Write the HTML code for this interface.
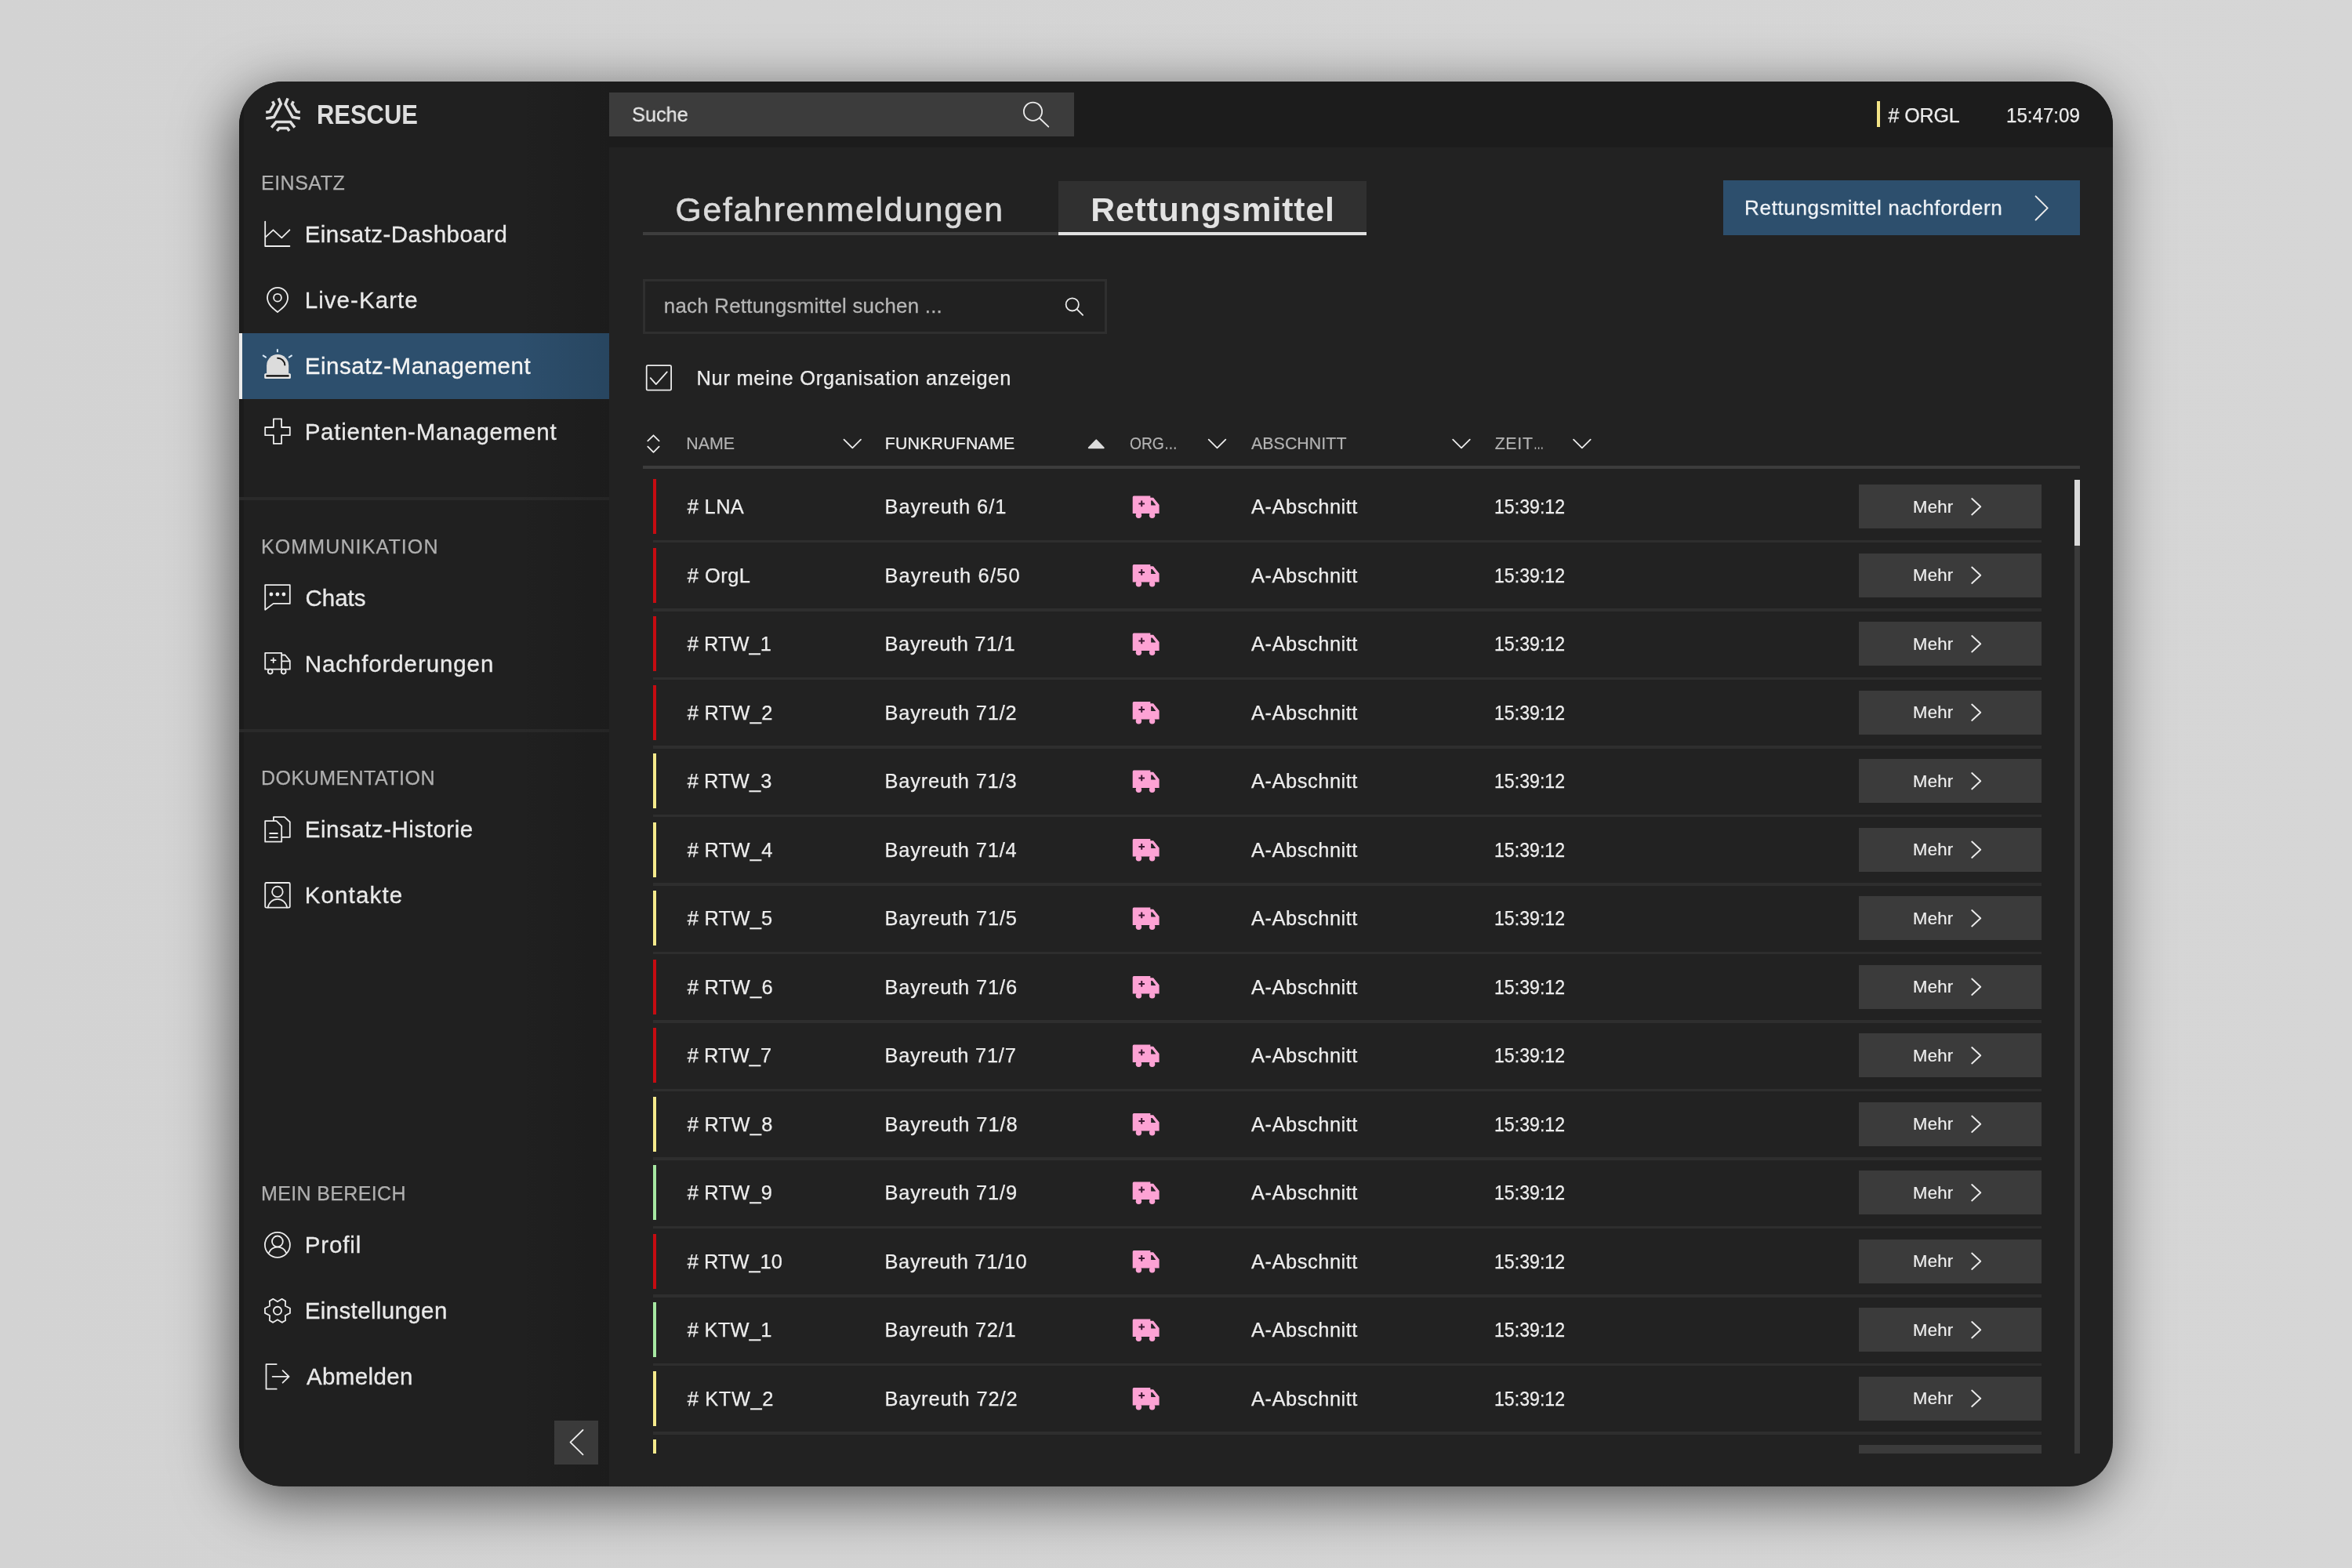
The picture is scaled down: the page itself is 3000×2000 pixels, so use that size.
<!DOCTYPE html>
<html lang="de"><head><meta charset="utf-8"><title>RESCUE – Einsatz-Management</title>
<style>
html,body{margin:0;padding:0}
body{width:3000px;height:2000px;background:linear-gradient(to right,#d3d3d3,#d6d6d6);position:relative;overflow:hidden;font-family:"Liberation Sans",sans-serif}
#device{position:absolute;left:305px;top:104px;width:2390px;height:1791.6px;border-radius:56px;background:#222222;box-shadow:-6px 16px 74px rgba(0,0,0,.6);overflow:hidden}
#stage{position:absolute;left:-305px;top:-104px;width:3000px;height:2000px;will-change:transform}
.b{position:absolute}
.t{position:absolute;white-space:pre;line-height:1;font-family:"Liberation Sans",sans-serif}
svg{position:absolute;overflow:visible}
.ic{fill:none;stroke:#ececec;stroke-width:1.8;stroke-linecap:round;stroke-linejoin:round}
#list{position:absolute;left:800px;top:598px;width:1880px;height:1255.7px;overflow:hidden}
#listin{position:absolute;left:-800px;top:-598px;width:3000px;height:2000px}
</style></head><body>
<div id="device"><div id="stage">

<div class="b" style="left:777px;top:104px;width:1918px;height:84px;background:#1c1c1c"></div>
<div class="b" style="left:305px;top:104px;width:472px;height:1791px;background:#202020"></div>
<div class="b" style="left:305px;top:104px;width:5.5px;height:1792px;background:#1b1b1b"></div>
<div class="b" style="left:305px;top:424.5px;width:472px;height:84px;background:#2d4f6d"></div>
<div class="b" style="left:305px;top:424.5px;width:4px;height:84px;background:#ececec"></div>
<div class="b" style="left:305px;top:634px;width:472px;height:4px;background:#2a2a2a"></div>
<div class="b" style="left:305px;top:930px;width:472px;height:4px;background:#2a2a2a"></div>
<div class="b" style="left:657px;top:104px;width:120px;height:1791px;background:linear-gradient(to right,rgba(0,0,0,0),rgba(0,0,0,.12))"></div>
<div class="b" style="left:707px;top:1812px;width:56px;height:56px;background:#3a3a3a"></div>
<div class="b" style="left:777px;top:118px;width:593.3px;height:56px;background:#3c3c3c"></div>
<div class="b" style="left:2394px;top:129.3px;width:4px;height:33.2px;background:#f3e487"></div>
<div class="b" style="left:819.5px;top:296.4px;width:530px;height:4px;background:#3e3e3e"></div>
<div class="b" style="left:1349.5px;top:230.5px;width:393.7px;height:70px;background:#303030"></div>
<div class="b" style="left:1349.5px;top:296.4px;width:393.7px;height:4.1px;background:#e2e2e2"></div>
<div class="b" style="left:2198px;top:230px;width:455px;height:70px;background:#2d4f6d"></div>
<div class="b" style="left:819.5px;top:355.8px;width:592.5px;height:70px;box-sizing:border-box;border:3.5px solid #2f2f2f;background:#212121"></div>
<div class="b" style="left:819.5px;top:594.2px;width:1833.5px;height:3.6px;background:#3c3c3c"></div>
<div class="b" style="left:2646px;top:611.6px;width:7.3px;height:1242.1px;background:#3b3b3b"></div>
<div class="b" style="left:2646px;top:611.6px;width:7.3px;height:84px;background:#dadada"></div>
<div class="t" style="left:403.73px;top:129.45px;font-size:35.61px;color:#dedede;font-weight:700;transform:scaleX(0.8684);transform-origin:0 0">RESCUE</div>
<div class="t" style="left:333.00px;top:221.33px;font-size:25.00px;letter-spacing:0.500px;color:#b0b0b0;-webkit-text-stroke:0.25px">EINSATZ</div>
<div class="t" style="left:333.00px;top:685.13px;font-size:25.00px;letter-spacing:1.119px;color:#b0b0b0;-webkit-text-stroke:0.25px">KOMMUNIKATION</div>
<div class="t" style="left:333.00px;top:980.33px;font-size:25.00px;letter-spacing:0.477px;color:#b0b0b0;-webkit-text-stroke:0.25px">DOKUMENTATION</div>
<div class="t" style="left:333.00px;top:1510.33px;font-size:25.00px;letter-spacing:0.353px;color:#b0b0b0;-webkit-text-stroke:0.25px">MEIN BEREICH</div>
<div class="t" style="left:388.68px;top:284.27px;font-size:29.51px;letter-spacing:0.452px;color:#e9e9e9;-webkit-text-stroke:0.30px">Einsatz-Dashboard</div>
<div class="t" style="left:388.68px;top:368.27px;font-size:29.51px;letter-spacing:1.064px;color:#e9e9e9;-webkit-text-stroke:0.30px">Live-Karte</div>
<div class="t" style="left:388.68px;top:452.27px;font-size:29.51px;letter-spacing:0.539px;color:#f4f4f4;-webkit-text-stroke:0.30px">Einsatz-Management</div>
<div class="t" style="left:388.68px;top:536.27px;font-size:29.51px;letter-spacing:0.750px;color:#e9e9e9;-webkit-text-stroke:0.30px">Patienten-Management</div>
<div class="t" style="left:389.59px;top:747.52px;font-size:29.51px;letter-spacing:-0.050px;color:#e9e9e9;-webkit-text-stroke:0.30px">Chats</div>
<div class="t" style="left:388.68px;top:831.52px;font-size:29.51px;letter-spacing:0.906px;color:#e9e9e9;-webkit-text-stroke:0.30px">Nachforderungen</div>
<div class="t" style="left:388.68px;top:1043.02px;font-size:29.51px;letter-spacing:0.531px;color:#e9e9e9;-webkit-text-stroke:0.30px">Einsatz-Historie</div>
<div class="t" style="left:388.68px;top:1127.02px;font-size:29.51px;letter-spacing:1.154px;color:#e9e9e9;-webkit-text-stroke:0.30px">Kontakte</div>
<div class="t" style="left:388.68px;top:1573.02px;font-size:29.51px;letter-spacing:0.899px;color:#e9e9e9;-webkit-text-stroke:0.30px">Profil</div>
<div class="t" style="left:388.68px;top:1657.02px;font-size:29.51px;letter-spacing:0.376px;color:#e9e9e9;-webkit-text-stroke:0.30px">Einstellungen</div>
<div class="t" style="left:391.04px;top:1741.02px;font-size:29.51px;letter-spacing:0.350px;color:#e9e9e9;-webkit-text-stroke:0.30px">Abmelden</div>
<div class="t" style="left:805.70px;top:133.35px;font-size:26.16px;color:#e4e4e4;-webkit-text-stroke:0.26px;transform:scaleX(0.9689);transform-origin:0 0">Suche</div>
<div class="t" style="left:2408.45px;top:134.58px;font-size:25.00px;letter-spacing:-0.075px;color:#ececec;-webkit-text-stroke:0.25px"># ORGL</div>
<div class="t" style="left:2558.72px;top:134.58px;font-size:25.00px;color:#ececec;-webkit-text-stroke:0.25px;transform:scaleX(0.9645);transform-origin:0 0">15:47:09</div>
<div class="t" style="left:861.49px;top:245.62px;font-size:42.73px;letter-spacing:1.754px;color:#dadada;-webkit-text-stroke:0.60px">Gefahrenmeldungen</div>
<div class="t" style="left:1391.19px;top:245.82px;font-size:42.73px;letter-spacing:0.904px;color:#e2e2e2;font-weight:700">Rettungsmittel</div>
<div class="t" style="left:2225.02px;top:252.35px;font-size:26.16px;letter-spacing:0.587px;color:#eef2f6;-webkit-text-stroke:0.26px">Rettungsmittel nachfordern</div>
<div class="t" style="left:846.85px;top:378.09px;font-size:25.87px;letter-spacing:0.244px;color:#b6b6b6;-webkit-text-stroke:0.26px">nach Rettungsmittel suchen ...</div>
<div class="t" style="left:888.47px;top:469.71px;font-size:25.44px;letter-spacing:0.730px;color:#ececec;-webkit-text-stroke:0.25px">Nur meine Organisation anzeigen</div>
<div class="t" style="left:875.26px;top:555.71px;font-size:21.37px;letter-spacing:0.042px;color:#b2b2b2;-webkit-text-stroke:0.21px">NAME</div>
<div class="t" style="left:1128.76px;top:555.71px;font-size:21.37px;letter-spacing:0.163px;color:#ededed;-webkit-text-stroke:0.21px">FUNKRUFNAME</div>
<div class="t" style="left:1440.86px;top:555.71px;font-size:21.37px;color:#b2b2b2;-webkit-text-stroke:0.21px;transform:scaleX(0.9005);transform-origin:0 0">ORG<span style="display:inline-block;letter-spacing:0;margin-left:0.04px;transform:scaleX(0.8757);transform-origin:0 0">…</span></div>
<div class="t" style="left:1595.97px;top:555.71px;font-size:21.37px;letter-spacing:0.057px;color:#b2b2b2;-webkit-text-stroke:0.21px">ABSCHNITT</div>
<div class="t" style="left:1906.63px;top:555.71px;font-size:21.37px;letter-spacing:0.688px;color:#b2b2b2;-webkit-text-stroke:0.21px">ZEIT<span style="display:inline-block;letter-spacing:0;margin-left:0.14px;transform:scaleX(0.6180);transform-origin:0 0">…</span></div>
<div id="list"><div id="listin">
<div class="b" style="left:833.3px;top:611.25px;width:4.2px;height:70px;background:#c60b11"></div>
<div class="b" style="left:833.3px;top:688.95px;width:1771px;height:3.4px;background:#2e2e2e"></div>
<div class="b" style="left:2371.3px;top:618.25px;width:233px;height:56px;background:#3b3b3b"></div>
<div class="t" style="left:876.70px;top:634.21px;font-size:25.44px;letter-spacing:0.359px;color:#ededed;-webkit-text-stroke:0.25px"># LNA</div>
<div class="t" style="left:1128.47px;top:634.21px;font-size:25.44px;letter-spacing:0.970px;color:#ededed;-webkit-text-stroke:0.25px">Bayreuth 6/1</div>
<div class="t" style="left:1596.00px;top:634.21px;font-size:25.44px;letter-spacing:0.537px;color:#ededed;-webkit-text-stroke:0.25px">A-Abschnitt</div>
<div class="t" style="left:1905.60px;top:634.21px;font-size:25.44px;color:#ededed;-webkit-text-stroke:0.25px;transform:scaleX(0.9095);transform-origin:0 0">15:39:12</div>
<div class="t" style="left:2440.01px;top:635.54px;font-size:22.09px;letter-spacing:0.244px;color:#ededed;-webkit-text-stroke:0.22px">Mehr</div>
<svg style="left:0;top:0" width="3000" height="2000"><use href="#amb" x="0" y="0.0"/><polyline class="ic" style="stroke-width:1.9" points="2515.2,636.05 2526.2,646.25 2515.2,656.45"/></svg>
<div class="b" style="left:833.3px;top:698.75px;width:4.2px;height:70px;background:#c60b11"></div>
<div class="b" style="left:833.3px;top:776.45px;width:1771px;height:3.4px;background:#2e2e2e"></div>
<div class="b" style="left:2371.3px;top:705.75px;width:233px;height:56px;background:#3b3b3b"></div>
<div class="t" style="left:876.70px;top:721.71px;font-size:25.44px;letter-spacing:0.494px;color:#ededed;-webkit-text-stroke:0.25px"># OrgL</div>
<div class="t" style="left:1128.47px;top:721.71px;font-size:25.44px;letter-spacing:1.140px;color:#ededed;-webkit-text-stroke:0.25px">Bayreuth 6/50</div>
<div class="t" style="left:1596.00px;top:721.71px;font-size:25.44px;letter-spacing:0.537px;color:#ededed;-webkit-text-stroke:0.25px">A-Abschnitt</div>
<div class="t" style="left:1905.60px;top:721.71px;font-size:25.44px;color:#ededed;-webkit-text-stroke:0.25px;transform:scaleX(0.9095);transform-origin:0 0">15:39:12</div>
<div class="t" style="left:2440.01px;top:723.04px;font-size:22.09px;letter-spacing:0.244px;color:#ededed;-webkit-text-stroke:0.22px">Mehr</div>
<svg style="left:0;top:0" width="3000" height="2000"><use href="#amb" x="0" y="87.5"/><polyline class="ic" style="stroke-width:1.9" points="2515.2,723.55 2526.2,733.75 2515.2,743.95"/></svg>
<div class="b" style="left:833.3px;top:786.25px;width:4.2px;height:70px;background:#c60b11"></div>
<div class="b" style="left:833.3px;top:863.95px;width:1771px;height:3.4px;background:#2e2e2e"></div>
<div class="b" style="left:2371.3px;top:793.25px;width:233px;height:56px;background:#3b3b3b"></div>
<div class="t" style="left:876.70px;top:809.21px;font-size:25.44px;letter-spacing:0.048px;color:#ededed;-webkit-text-stroke:0.25px"># RTW_1</div>
<div class="t" style="left:1128.47px;top:809.21px;font-size:25.44px;letter-spacing:0.653px;color:#ededed;-webkit-text-stroke:0.25px">Bayreuth 71/1</div>
<div class="t" style="left:1596.00px;top:809.21px;font-size:25.44px;letter-spacing:0.537px;color:#ededed;-webkit-text-stroke:0.25px">A-Abschnitt</div>
<div class="t" style="left:1905.60px;top:809.21px;font-size:25.44px;color:#ededed;-webkit-text-stroke:0.25px;transform:scaleX(0.9095);transform-origin:0 0">15:39:12</div>
<div class="t" style="left:2440.01px;top:810.54px;font-size:22.09px;letter-spacing:0.244px;color:#ededed;-webkit-text-stroke:0.22px">Mehr</div>
<svg style="left:0;top:0" width="3000" height="2000"><use href="#amb" x="0" y="175.0"/><polyline class="ic" style="stroke-width:1.9" points="2515.2,811.05 2526.2,821.25 2515.2,831.45"/></svg>
<div class="b" style="left:833.3px;top:873.75px;width:4.2px;height:70px;background:#c60b11"></div>
<div class="b" style="left:833.3px;top:951.45px;width:1771px;height:3.4px;background:#2e2e2e"></div>
<div class="b" style="left:2371.3px;top:880.75px;width:233px;height:56px;background:#3b3b3b"></div>
<div class="t" style="left:876.70px;top:896.71px;font-size:25.44px;letter-spacing:0.302px;color:#ededed;-webkit-text-stroke:0.25px"># RTW_2</div>
<div class="t" style="left:1128.47px;top:896.71px;font-size:25.44px;letter-spacing:0.821px;color:#ededed;-webkit-text-stroke:0.25px">Bayreuth 71/2</div>
<div class="t" style="left:1596.00px;top:896.71px;font-size:25.44px;letter-spacing:0.537px;color:#ededed;-webkit-text-stroke:0.25px">A-Abschnitt</div>
<div class="t" style="left:1905.60px;top:896.71px;font-size:25.44px;color:#ededed;-webkit-text-stroke:0.25px;transform:scaleX(0.9095);transform-origin:0 0">15:39:12</div>
<div class="t" style="left:2440.01px;top:898.04px;font-size:22.09px;letter-spacing:0.244px;color:#ededed;-webkit-text-stroke:0.22px">Mehr</div>
<svg style="left:0;top:0" width="3000" height="2000"><use href="#amb" x="0" y="262.5"/><polyline class="ic" style="stroke-width:1.9" points="2515.2,898.55 2526.2,908.75 2515.2,918.95"/></svg>
<div class="b" style="left:833.3px;top:961.25px;width:4.2px;height:70px;background:#f5ea8b"></div>
<div class="b" style="left:833.3px;top:1038.95px;width:1771px;height:3.4px;background:#2e2e2e"></div>
<div class="b" style="left:2371.3px;top:968.25px;width:233px;height:56px;background:#3b3b3b"></div>
<div class="t" style="left:876.70px;top:984.21px;font-size:25.44px;letter-spacing:0.110px;color:#ededed;-webkit-text-stroke:0.25px"># RTW_3</div>
<div class="t" style="left:1128.47px;top:984.21px;font-size:25.44px;letter-spacing:0.809px;color:#ededed;-webkit-text-stroke:0.25px">Bayreuth 71/3</div>
<div class="t" style="left:1596.00px;top:984.21px;font-size:25.44px;letter-spacing:0.537px;color:#ededed;-webkit-text-stroke:0.25px">A-Abschnitt</div>
<div class="t" style="left:1905.60px;top:984.21px;font-size:25.44px;color:#ededed;-webkit-text-stroke:0.25px;transform:scaleX(0.9095);transform-origin:0 0">15:39:12</div>
<div class="t" style="left:2440.01px;top:985.54px;font-size:22.09px;letter-spacing:0.244px;color:#ededed;-webkit-text-stroke:0.22px">Mehr</div>
<svg style="left:0;top:0" width="3000" height="2000"><use href="#amb" x="0" y="350.0"/><polyline class="ic" style="stroke-width:1.9" points="2515.2,986.05 2526.2,996.25 2515.2,1006.45"/></svg>
<div class="b" style="left:833.3px;top:1048.75px;width:4.2px;height:70px;background:#f5ea8b"></div>
<div class="b" style="left:833.3px;top:1126.45px;width:1771px;height:3.4px;background:#2e2e2e"></div>
<div class="b" style="left:2371.3px;top:1055.75px;width:233px;height:56px;background:#3b3b3b"></div>
<div class="t" style="left:876.70px;top:1071.71px;font-size:25.44px;letter-spacing:0.296px;color:#ededed;-webkit-text-stroke:0.25px"># RTW_4</div>
<div class="t" style="left:1128.47px;top:1071.71px;font-size:25.44px;letter-spacing:0.818px;color:#ededed;-webkit-text-stroke:0.25px">Bayreuth 71/4</div>
<div class="t" style="left:1596.00px;top:1071.71px;font-size:25.44px;letter-spacing:0.537px;color:#ededed;-webkit-text-stroke:0.25px">A-Abschnitt</div>
<div class="t" style="left:1905.60px;top:1071.71px;font-size:25.44px;color:#ededed;-webkit-text-stroke:0.25px;transform:scaleX(0.9095);transform-origin:0 0">15:39:12</div>
<div class="t" style="left:2440.01px;top:1073.04px;font-size:22.09px;letter-spacing:0.244px;color:#ededed;-webkit-text-stroke:0.22px">Mehr</div>
<svg style="left:0;top:0" width="3000" height="2000"><use href="#amb" x="0" y="437.5"/><polyline class="ic" style="stroke-width:1.9" points="2515.2,1073.55 2526.2,1083.75 2515.2,1093.95"/></svg>
<div class="b" style="left:833.3px;top:1136.25px;width:4.2px;height:70px;background:#f5ea8b"></div>
<div class="b" style="left:833.3px;top:1213.95px;width:1771px;height:3.4px;background:#2e2e2e"></div>
<div class="b" style="left:2371.3px;top:1143.25px;width:233px;height:56px;background:#3b3b3b"></div>
<div class="t" style="left:876.70px;top:1159.21px;font-size:25.44px;letter-spacing:0.268px;color:#ededed;-webkit-text-stroke:0.25px"># RTW_5</div>
<div class="t" style="left:1128.47px;top:1159.21px;font-size:25.44px;letter-spacing:0.846px;color:#ededed;-webkit-text-stroke:0.25px">Bayreuth 71/5</div>
<div class="t" style="left:1596.00px;top:1159.21px;font-size:25.44px;letter-spacing:0.537px;color:#ededed;-webkit-text-stroke:0.25px">A-Abschnitt</div>
<div class="t" style="left:1905.60px;top:1159.21px;font-size:25.44px;color:#ededed;-webkit-text-stroke:0.25px;transform:scaleX(0.9095);transform-origin:0 0">15:39:12</div>
<div class="t" style="left:2440.01px;top:1160.54px;font-size:22.09px;letter-spacing:0.244px;color:#ededed;-webkit-text-stroke:0.22px">Mehr</div>
<svg style="left:0;top:0" width="3000" height="2000"><use href="#amb" x="0" y="525.0"/><polyline class="ic" style="stroke-width:1.9" points="2515.2,1161.05 2526.2,1171.25 2515.2,1181.45"/></svg>
<div class="b" style="left:833.3px;top:1223.75px;width:4.2px;height:70px;background:#c60b11"></div>
<div class="b" style="left:833.3px;top:1301.45px;width:1771px;height:3.4px;background:#2e2e2e"></div>
<div class="b" style="left:2371.3px;top:1230.75px;width:233px;height:56px;background:#3b3b3b"></div>
<div class="t" style="left:876.70px;top:1246.71px;font-size:25.44px;letter-spacing:0.327px;color:#ededed;-webkit-text-stroke:0.25px"># RTW_6</div>
<div class="t" style="left:1128.47px;top:1246.71px;font-size:25.44px;letter-spacing:0.850px;color:#ededed;-webkit-text-stroke:0.25px">Bayreuth 71/6</div>
<div class="t" style="left:1596.00px;top:1246.71px;font-size:25.44px;letter-spacing:0.537px;color:#ededed;-webkit-text-stroke:0.25px">A-Abschnitt</div>
<div class="t" style="left:1905.60px;top:1246.71px;font-size:25.44px;color:#ededed;-webkit-text-stroke:0.25px;transform:scaleX(0.9095);transform-origin:0 0">15:39:12</div>
<div class="t" style="left:2440.01px;top:1248.04px;font-size:22.09px;letter-spacing:0.244px;color:#ededed;-webkit-text-stroke:0.22px">Mehr</div>
<svg style="left:0;top:0" width="3000" height="2000"><use href="#amb" x="0" y="612.5"/><polyline class="ic" style="stroke-width:1.9" points="2515.2,1248.55 2526.2,1258.75 2515.2,1268.95"/></svg>
<div class="b" style="left:833.3px;top:1311.25px;width:4.2px;height:70px;background:#c60b11"></div>
<div class="b" style="left:833.3px;top:1388.95px;width:1771px;height:3.4px;background:#2e2e2e"></div>
<div class="b" style="left:2371.3px;top:1318.25px;width:233px;height:56px;background:#3b3b3b"></div>
<div class="t" style="left:876.70px;top:1334.21px;font-size:25.44px;letter-spacing:0.102px;color:#ededed;-webkit-text-stroke:0.25px"># RTW_7</div>
<div class="t" style="left:1128.47px;top:1334.21px;font-size:25.44px;letter-spacing:0.746px;color:#ededed;-webkit-text-stroke:0.25px">Bayreuth 71/7</div>
<div class="t" style="left:1596.00px;top:1334.21px;font-size:25.44px;letter-spacing:0.537px;color:#ededed;-webkit-text-stroke:0.25px">A-Abschnitt</div>
<div class="t" style="left:1905.60px;top:1334.21px;font-size:25.44px;color:#ededed;-webkit-text-stroke:0.25px;transform:scaleX(0.9095);transform-origin:0 0">15:39:12</div>
<div class="t" style="left:2440.01px;top:1335.54px;font-size:22.09px;letter-spacing:0.244px;color:#ededed;-webkit-text-stroke:0.22px">Mehr</div>
<svg style="left:0;top:0" width="3000" height="2000"><use href="#amb" x="0" y="700.0"/><polyline class="ic" style="stroke-width:1.9" points="2515.2,1336.05 2526.2,1346.25 2515.2,1356.45"/></svg>
<div class="b" style="left:833.3px;top:1398.75px;width:4.2px;height:70px;background:#f5ea8b"></div>
<div class="b" style="left:833.3px;top:1476.45px;width:1771px;height:3.4px;background:#2e2e2e"></div>
<div class="b" style="left:2371.3px;top:1405.75px;width:233px;height:56px;background:#3b3b3b"></div>
<div class="t" style="left:876.70px;top:1421.71px;font-size:25.44px;letter-spacing:0.272px;color:#ededed;-webkit-text-stroke:0.25px"># RTW_8</div>
<div class="t" style="left:1128.47px;top:1421.71px;font-size:25.44px;letter-spacing:0.890px;color:#ededed;-webkit-text-stroke:0.25px">Bayreuth 71/8</div>
<div class="t" style="left:1596.00px;top:1421.71px;font-size:25.44px;letter-spacing:0.537px;color:#ededed;-webkit-text-stroke:0.25px">A-Abschnitt</div>
<div class="t" style="left:1905.60px;top:1421.71px;font-size:25.44px;color:#ededed;-webkit-text-stroke:0.25px;transform:scaleX(0.9095);transform-origin:0 0">15:39:12</div>
<div class="t" style="left:2440.01px;top:1423.04px;font-size:22.09px;letter-spacing:0.244px;color:#ededed;-webkit-text-stroke:0.22px">Mehr</div>
<svg style="left:0;top:0" width="3000" height="2000"><use href="#amb" x="0" y="787.5"/><polyline class="ic" style="stroke-width:1.9" points="2515.2,1423.55 2526.2,1433.75 2515.2,1443.95"/></svg>
<div class="b" style="left:833.3px;top:1486.25px;width:4.2px;height:70px;background:#a6e8a2"></div>
<div class="b" style="left:833.3px;top:1563.95px;width:1771px;height:3.4px;background:#2e2e2e"></div>
<div class="b" style="left:2371.3px;top:1493.25px;width:233px;height:56px;background:#3b3b3b"></div>
<div class="t" style="left:876.70px;top:1509.21px;font-size:25.44px;letter-spacing:0.206px;color:#ededed;-webkit-text-stroke:0.25px"># RTW_9</div>
<div class="t" style="left:1128.47px;top:1509.21px;font-size:25.44px;letter-spacing:0.857px;color:#ededed;-webkit-text-stroke:0.25px">Bayreuth 71/9</div>
<div class="t" style="left:1596.00px;top:1509.21px;font-size:25.44px;letter-spacing:0.537px;color:#ededed;-webkit-text-stroke:0.25px">A-Abschnitt</div>
<div class="t" style="left:1905.60px;top:1509.21px;font-size:25.44px;color:#ededed;-webkit-text-stroke:0.25px;transform:scaleX(0.9095);transform-origin:0 0">15:39:12</div>
<div class="t" style="left:2440.01px;top:1510.54px;font-size:22.09px;letter-spacing:0.244px;color:#ededed;-webkit-text-stroke:0.22px">Mehr</div>
<svg style="left:0;top:0" width="3000" height="2000"><use href="#amb" x="0" y="875.0"/><polyline class="ic" style="stroke-width:1.9" points="2515.2,1511.05 2526.2,1521.25 2515.2,1531.45"/></svg>
<div class="b" style="left:833.3px;top:1573.75px;width:4.2px;height:70px;background:#c60b11"></div>
<div class="b" style="left:833.3px;top:1651.45px;width:1771px;height:3.4px;background:#2e2e2e"></div>
<div class="b" style="left:2371.3px;top:1580.75px;width:233px;height:56px;background:#3b3b3b"></div>
<div class="t" style="left:876.70px;top:1596.71px;font-size:25.44px;letter-spacing:0.013px;color:#ededed;-webkit-text-stroke:0.25px"># RTW_10</div>
<div class="t" style="left:1128.47px;top:1596.71px;font-size:25.44px;letter-spacing:0.672px;color:#ededed;-webkit-text-stroke:0.25px">Bayreuth 71/10</div>
<div class="t" style="left:1596.00px;top:1596.71px;font-size:25.44px;letter-spacing:0.537px;color:#ededed;-webkit-text-stroke:0.25px">A-Abschnitt</div>
<div class="t" style="left:1905.60px;top:1596.71px;font-size:25.44px;color:#ededed;-webkit-text-stroke:0.25px;transform:scaleX(0.9095);transform-origin:0 0">15:39:12</div>
<div class="t" style="left:2440.01px;top:1598.04px;font-size:22.09px;letter-spacing:0.244px;color:#ededed;-webkit-text-stroke:0.22px">Mehr</div>
<svg style="left:0;top:0" width="3000" height="2000"><use href="#amb" x="0" y="962.5"/><polyline class="ic" style="stroke-width:1.9" points="2515.2,1598.55 2526.2,1608.75 2515.2,1618.95"/></svg>
<div class="b" style="left:833.3px;top:1661.25px;width:4.2px;height:70px;background:#a6e8a2"></div>
<div class="b" style="left:833.3px;top:1738.95px;width:1771px;height:3.4px;background:#2e2e2e"></div>
<div class="b" style="left:2371.3px;top:1668.25px;width:233px;height:56px;background:#3b3b3b"></div>
<div class="t" style="left:876.70px;top:1684.21px;font-size:25.44px;letter-spacing:0.287px;color:#ededed;-webkit-text-stroke:0.25px"># KTW_1</div>
<div class="t" style="left:1128.47px;top:1684.21px;font-size:25.44px;letter-spacing:0.736px;color:#ededed;-webkit-text-stroke:0.25px">Bayreuth 72/1</div>
<div class="t" style="left:1596.00px;top:1684.21px;font-size:25.44px;letter-spacing:0.537px;color:#ededed;-webkit-text-stroke:0.25px">A-Abschnitt</div>
<div class="t" style="left:1905.60px;top:1684.21px;font-size:25.44px;color:#ededed;-webkit-text-stroke:0.25px;transform:scaleX(0.9095);transform-origin:0 0">15:39:12</div>
<div class="t" style="left:2440.01px;top:1685.54px;font-size:22.09px;letter-spacing:0.244px;color:#ededed;-webkit-text-stroke:0.22px">Mehr</div>
<svg style="left:0;top:0" width="3000" height="2000"><use href="#amb" x="0" y="1050.0"/><polyline class="ic" style="stroke-width:1.9" points="2515.2,1686.05 2526.2,1696.25 2515.2,1706.45"/></svg>
<div class="b" style="left:833.3px;top:1748.75px;width:4.2px;height:70px;background:#f5ea8b"></div>
<div class="b" style="left:833.3px;top:1826.45px;width:1771px;height:3.4px;background:#2e2e2e"></div>
<div class="b" style="left:2371.3px;top:1755.75px;width:233px;height:56px;background:#3b3b3b"></div>
<div class="t" style="left:876.70px;top:1771.71px;font-size:25.44px;letter-spacing:0.625px;color:#ededed;-webkit-text-stroke:0.25px"># KTW_2</div>
<div class="t" style="left:1128.47px;top:1771.71px;font-size:25.44px;letter-spacing:0.905px;color:#ededed;-webkit-text-stroke:0.25px">Bayreuth 72/2</div>
<div class="t" style="left:1596.00px;top:1771.71px;font-size:25.44px;letter-spacing:0.537px;color:#ededed;-webkit-text-stroke:0.25px">A-Abschnitt</div>
<div class="t" style="left:1905.60px;top:1771.71px;font-size:25.44px;color:#ededed;-webkit-text-stroke:0.25px;transform:scaleX(0.9095);transform-origin:0 0">15:39:12</div>
<div class="t" style="left:2440.01px;top:1773.04px;font-size:22.09px;letter-spacing:0.244px;color:#ededed;-webkit-text-stroke:0.22px">Mehr</div>
<svg style="left:0;top:0" width="3000" height="2000"><use href="#amb" x="0" y="1137.5"/><polyline class="ic" style="stroke-width:1.9" points="2515.2,1773.55 2526.2,1783.75 2515.2,1793.95"/></svg>
<div class="b" style="left:833.3px;top:1836.25px;width:4.2px;height:70px;background:#f5ea8b"></div>
<div class="b" style="left:833.3px;top:1913.95px;width:1771px;height:3.4px;background:#2e2e2e"></div>
<div class="b" style="left:2371.3px;top:1843.25px;width:233px;height:56px;background:#3b3b3b"></div>
<div class="t" style="left:876.70px;top:1859.21px;font-size:25.44px;letter-spacing:0.566px;color:#ededed;-webkit-text-stroke:0.25px"># KTW_3</div>
<div class="t" style="left:1128.47px;top:1859.21px;font-size:25.44px;letter-spacing:0.892px;color:#ededed;-webkit-text-stroke:0.25px">Bayreuth 72/3</div>
<div class="t" style="left:1596.00px;top:1859.21px;font-size:25.44px;letter-spacing:0.537px;color:#ededed;-webkit-text-stroke:0.25px">A-Abschnitt</div>
<div class="t" style="left:1905.60px;top:1859.21px;font-size:25.44px;color:#ededed;-webkit-text-stroke:0.25px;transform:scaleX(0.9095);transform-origin:0 0">15:39:12</div>
<div class="t" style="left:2440.01px;top:1860.54px;font-size:22.09px;letter-spacing:0.244px;color:#ededed;-webkit-text-stroke:0.22px">Mehr</div>
<svg style="left:0;top:0" width="3000" height="2000"><use href="#amb" x="0" y="1225.0"/><polyline class="ic" style="stroke-width:1.9" points="2515.2,1861.05 2526.2,1871.25 2515.2,1881.45"/></svg>
</div></div>
<svg style="left:0;top:0" width="3000" height="2000" viewBox="0 0 3000 2000">
<defs>
<g id="amb">
<path fill="#fda2d4" d="M1444.7,634 Q1444.7,632.5 1446.2,632.5 H1467.3 V634.75 H1471.1 L1478.6,643.9 V655 H1444.7 Z"/>
<circle fill="#fda2d4" cx="1452.4" cy="657.3" r="3.7"/><circle fill="#fda2d4" cx="1469.6" cy="657.3" r="3.7"/>
<path fill="none" stroke="#3b1730" stroke-width="2" d="M1452.4,642.4 H1460 M1456.2,638.6 V646.2"/>
<path fill="#262326" d="M1468.1,638.4 H1469.8 L1474,643.9 V644.6 H1468.1 Z"/>
</g>
</defs>
<!-- logo -->
<g fill="none" stroke="#dedede" stroke-width="3.5" stroke-linejoin="miter">
<path d="M346.2,162.6 L352.2,155.6 H370.5 L375.9,162.6"/>
<path d="M353.3,167 L356,163.6 H366.7 L369,167"/>
<path d="M355.2,125.3 L358.3,132.6 L349.5,149.4 L339.2,151"/>
<path d="M347.6,129.2 L349.5,133 L344.1,142.5 L339.2,143.3"/>
<path d="M367.1,125.3 L364,133 L373.2,149.4 L382.8,151"/>
<path d="M374.3,129.2 L372.4,133 L378.2,142.5 L382.8,143.3"/>
</g>
<!-- chart -->
<path class="ic" d="M338.2,282.6 V314 H369.4 M338.2,302.9 L348.5,293.3 L359.3,303.3 L369.4,293.3"/>
<!-- map pin -->
<path class="ic" d="M354,398 C349,394 341,388.5 341,379.85 A13.05,13.05 0 0 1 367.1,379.85 C367.1,388.5 359,394 354,398 Z"/>
<circle class="ic" cx="354" cy="379.7" r="4.9"/>
<!-- siren -->
<path fill="#dcdcdc" d="M340.1,476.4 V466.15 A14.05,14.05 0 0 1 368.2,466.15 V476.4 Z"/>
<rect x="337.2" y="476.2" width="33.7" height="6.8" rx="1.6" fill="#ebebeb"/>
<rect x="339.4" y="478.1" width="29.2" height="2.6" fill="#1e1e1e"/>
<path fill="none" stroke="#1a1a1a" stroke-width="2" stroke-linecap="round" d="M354.1,456.7 A9.2,9.2 0 0 1 363.3,465.5"/>
<path fill="none" stroke="#dcebf8" stroke-width="2" d="M353.9,445.2 V449.2 M335.1,453.2 L339.7,456.1 M372.6,453.2 L368.1,456.1"/>
<!-- cross -->
<path class="ic" d="M348.9,534.3 H359.1 V545 H369.8 V555.2 H359.1 V565.9 H348.9 V555.2 H338.2 V545 H348.9 Z"/>
<!-- chat -->
<path class="ic" d="M338.2,777.7 V746.2 H369.8 V769.9 H348.7 Z"/>
<circle fill="#ececec" cx="345.9" cy="758" r="2.4"/><circle fill="#ececec" cx="353.9" cy="758" r="2.4"/><circle fill="#ececec" cx="361.9" cy="758" r="2.4"/>
<!-- ambulance outline -->
<path class="ic" d="M359.2,853.7 H338.2 V832.8 H359.2 Z M359.2,835.5 H363.7 L369.8,842.8 V853.7 H359.2 M359.2,843.4 H369.8 M345.8,842.2 H351.6 M348.7,839.3 V845.1"/>
<circle class="ic" style="fill:#202020" cx="344.7" cy="856.6" r="2.9"/><circle class="ic" style="fill:#202020" cx="361.7" cy="856.6" r="2.9"/>
<!-- files -->
<path class="ic" d="M338.2,1047.1 H352.6 L359.2,1053.6 V1073.7 H338.2 Z M348.9,1047.1 V1042.2 H362.9 L369.8,1048.5 V1067.8 H359.2 M344.1,1063 H353.9 M344.1,1068.2 H353.9"/>
<!-- contacts -->
<rect class="ic" x="338.2" y="1126" width="31.6" height="31.7" rx="1.5"/>
<circle class="ic" cx="353.9" cy="1137.4" r="6.8"/>
<path class="ic" d="M341.8,1157.5 A12.3,12.6 0 0 1 366.1,1157.5"/>
<!-- profile -->
<circle class="ic" cx="353.9" cy="1587.85" r="16"/>
<circle class="ic" cx="353.9" cy="1583.4" r="6.9"/>
<path class="ic" d="M343,1597.8 A12.07,12.07 0 0 1 365,1597.8"/>
<!-- gear -->
<g transform="translate(353.97,1671.85)">
<path class="ic" d="M0,-11.5 L5.66,-15 L10.14,-12.4 L9.87,-6.05 L16,-3.06 L16,3.06 L9.87,6.12 L10.14,12.4 L5.66,15 L0,11.5 L-5.66,15 L-10.14,12.4 L-9.87,6.12 L-16,3.06 L-16,-3.06 L-9.87,-6.05 L-10.14,-12.4 L-5.66,-15 Z"/>
<circle class="ic" cx="0" cy="0" r="5.1"/>
</g>
<!-- sign out -->
<path class="ic" d="M352.7,1740.1 H339.5 V1771.7 H352.7 M347.6,1755.85 H368.6 M360.6,1748.2 L368.6,1755.85 L360.6,1763.7"/>
<!-- collapse chevron -->
<polyline class="ic" style="stroke-width:1.8" points="743.5,1824 727.5,1839.7 743.5,1855.4"/>
<!-- search icons -->
<circle class="ic" cx="1317.5" cy="142.2" r="11.6"/><path class="ic" d="M1326.2,151 L1337.3,161.7"/>
<circle class="ic" cx="1367.75" cy="388.4" r="8.1"/><path class="ic" d="M1374.1,394.9 L1381.1,401.8"/>
<!-- checkbox -->
<rect class="ic" x="824.7" y="466.2" width="31.4" height="31.5" rx="1.5"/>
<polyline class="ic" points="829.7,482.2 836.8,490.1 850.8,474.4"/>
<!-- sort -->
<polyline class="ic" style="stroke-width:1.8" points="826.3,562.3 833.5,555.3 840.6,562.3"/>
<polyline class="ic" style="stroke-width:1.8" points="826.3,569.7 833.5,576.9 840.6,569.7"/>
<!-- header chevrons -->
<polyline class="ic" style="stroke-width:1.8" points="1076.5,560.7 1087.3,571.4 1098,560.7"/>
<polyline class="ic" style="stroke-width:1.8" points="1541.7,560.7 1552.5,571.4 1563.3,560.7"/>
<polyline class="ic" style="stroke-width:1.8" points="1853.2,560.7 1864,571.4 1874.8,560.7"/>
<polyline class="ic" style="stroke-width:1.8" points="2007.1,560.7 2017.9,571.4 2028.7,560.7"/>
<path fill="#dcdcdc" stroke="#dcdcdc" stroke-width="2" stroke-linejoin="round" d="M1388.8,571.3 L1398.25,561.4 L1407.7,571.3 Z"/>
<!-- blue button chevron -->
<polyline class="ic" style="stroke-width:1.9" points="2596.6,250.3 2611.7,265.4 2596.6,280.5"/>
</svg>

</div></div></body></html>
